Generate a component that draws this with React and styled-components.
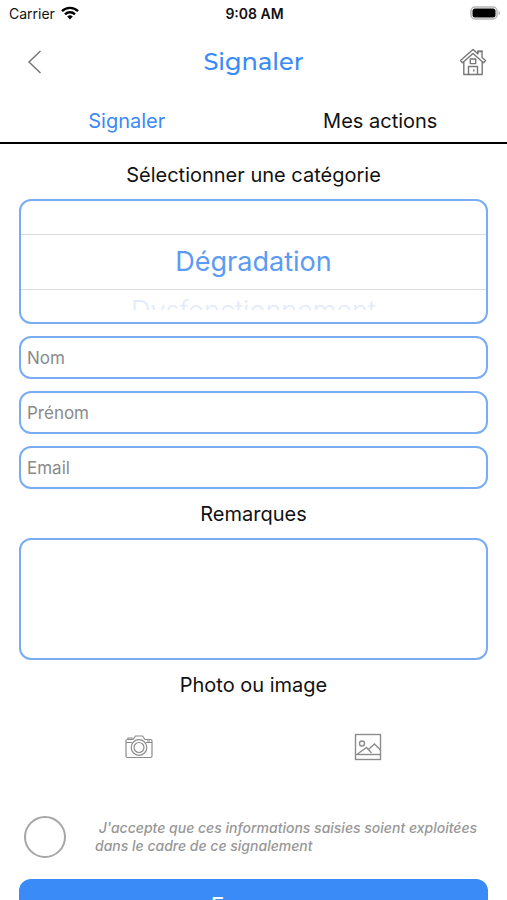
import React, { useState } from 'react';
import styled, { createGlobalStyle } from 'styled-components';

const GlobalStyle = createGlobalStyle`
  :root {
    --primary: #3a8af7;
    --outline: #78adf5;
    --muted: #8a8a8a;
    scrollbar-width: none;
  }

  *, *::before, *::after {
    box-sizing: border-box;
  }

  body {
    margin: 0;
    background: #fff;
    color: #111;
    font-family: Inter, 'Liberation Sans', sans-serif;
  }

  button, input, textarea {
    font: inherit;
    color: inherit;
  }
`;

const StatusBar = styled.div`
  display: grid;
  grid-template-columns: 1fr auto 1fr;
  align-items: center;
  height: 26px;
  padding: 0 7px 0 9px;
  font-size: 14px;
`;

const Carrier = styled.span`
  display: flex;
  align-items: center;
  gap: 6px;
`;

const Time = styled.time`
  font-weight: 600;
`;

const Battery = styled.svg`
  justify-self: end;
`;

const Header = styled.header`
  display: flex;
  align-items: center;
  justify-content: space-between;
  height: 71px;
  padding: 0 20px;
`;

const IconButton = styled.button`
  display: flex;
  padding: 0;
  border: 0;
  background: none;
  color: ${(props) => (props.$light ? '#8c8c8c' : '#777')};
  cursor: pointer;
`;

const Title = styled.h1`
  margin: 0;
  font-family: Montserrat, Inter, sans-serif;
  font-weight: 500;
  font-size: 24px;
  line-height: 28px;
  color: var(--primary);
`;

const Tabs = styled.nav`
  display: flex;
  height: 47px;
  border-bottom: 2px solid #000;
`;

const Tab = styled.a`
  flex: 1;
  padding-top: 11px;
  font-size: 20px;
  line-height: 26px;
  text-align: center;
  text-decoration: none;
  color: ${(props) => (props.$active ? 'var(--primary)' : 'inherit')};
`;

const Form = styled.form`
  display: flex;
  flex-direction: column;
  padding: 6px 19px 24px;
`;

const Label = styled.label`
  margin: 0;
  padding-top: 2px;
  font-weight: 400;
  font-size: 20px;
  line-height: 47px;
  text-align: center;
`;

const Fields = styled.div`
  display: flex;
  flex-direction: column;
  gap: 12px;
`;

const Picker = styled.div`
  display: flex;
  flex-direction: column;
  height: 125px;
  padding-top: 33px;
  border: 2px solid var(--outline);
  border-radius: 12px;
  overflow: hidden;
`;

const Option = styled.label`
  flex: none;
  font-size: 27px;
  text-align: center;
  cursor: pointer;

  input {
    position: absolute;
    opacity: 0;
    pointer-events: none;
  }
`;

const SelectedOption = styled(Option)`
  border-top: 1px solid #dcdcdc;
  border-bottom: 1px solid #dcdcdc;
  line-height: 54px;
  color: #5b9bf3;
`;

const NextOption = styled(Option)`
  order: 1;
  height: 20px;
  overflow: hidden;
  font-weight: 300;
  line-height: 42px;
  color: #e3ebfb;
`;

const Input = styled.input`
  width: 100%;
  height: 43px;
  padding: 0 6px;
  border: 2px solid var(--outline);
  border-radius: 12px;
  font-size: 17px;
  outline: none;

  &::placeholder {
    color: var(--muted);
    opacity: 1;
  }
`;

const TextArea = styled.textarea`
  display: block;
  height: 122px;
  padding: 8px 6px;
  border: 2px solid var(--outline);
  border-radius: 12px;
  font-size: 17px;
  resize: none;
  outline: none;
`;

const MediaRow = styled.div`
  display: flex;
  justify-content: space-around;
  height: 107px;
  padding: 24px 6px 0;
`;

const Consent = styled.label`
  display: flex;
  align-items: center;
  gap: 29px;
  padding-left: 5px;
  font-style: italic;
  font-weight: 500;
  font-size: 14px;
  line-height: 18px;
  color: #979797;
`;

const Round = styled.input`
  flex: none;
  appearance: none;
  width: 42px;
  height: 42px;
  margin: 0;
  border: 2px solid #a6a6a6;
  border-radius: 50%;

  &:checked {
    background: var(--primary);
  }
`;

const ConsentText = styled.span`
  white-space: pre-wrap;
`;

const Submit = styled.button`
  height: 52px;
  margin-top: 21px;
  border: 0;
  border-radius: 12px;
  background: var(--primary);
  color: #fff;
  font-weight: 500;
  font-size: 22px;
  cursor: pointer;
`;

const WifiIcon = () => (
  <svg width="18" height="14" viewBox="0 0 18 14" fill="none" stroke="#000" strokeWidth="2.4">
    <path d="M1 5.2a11.3 11.3 0 0 1 16 0" />
    <path d="M4 8.3a7.1 7.1 0 0 1 10 0" />
    <path d="M9 13.4 6.2 10.6a4 4 0 0 1 5.6 0Z" fill="#000" stroke="none" />
  </svg>
);

const BackIcon = () => (
  <svg width="28" height="28" viewBox="0 0 28 28" fill="none" stroke="currentColor" strokeWidth="1.5">
    <path d="M20.5 3 9 14l11.5 11" />
  </svg>
);

const HomeIcon = () => (
  <svg width="28" height="28" viewBox="0 0 28 28" fill="none" stroke="currentColor" strokeWidth="1.4" strokeLinejoin="round">
    <path d="M14 1.5 1.5 12.5l2 2.3L14 5.5l10.5 9.3 2-2.3L23 9.4V3.5h-4v2.4Z" />
    <path d="M18.2 3.2h5.6" />
    <path d="M4.8 14v12.5h18.4V14" />
    <path d="M9.5 26.5v-8h9v8M14.8 21.5v2" />
    <rect x="11.3" y="11" width="5.4" height="4.6" />
  </svg>
);

const CameraIcon = () => (
  <svg width="28" height="28" viewBox="0 0 28 28" fill="none" stroke="currentColor" strokeWidth="1.2">
    <path d="M2.5 6.5H8L10.5 3h7L20 6.5h5.5A1.5 1.5 0 0 1 27 8v15a1.5 1.5 0 0 1-1.5 1.5h-23A1.5 1.5 0 0 1 1 23V8a1.5 1.5 0 0 1 1.5-1.5Z" />
    <path d="M3 6.5V5h4v1.5M1 9.5h6M21 9.5h6M22 8h3" />
    <circle cx="14" cy="14.5" r="7.8" />
    <circle cx="14" cy="14.5" r="5" />
  </svg>
);

const ImageIcon = () => (
  <svg width="28" height="28" viewBox="0 0 28 28" fill="none" stroke="currentColor" strokeWidth="1.4">
    <rect x="1.5" y="1.5" width="25" height="25" />
    <path d="M1.5 21.5h25" />
    <circle cx="8" cy="10.5" r="2.5" />
    <path d="m3.5 21 9-6.5 5 5.5M14.5 16.500l6-5.500 6 6" />
  </svg>
);

const categories = ['Dégradation', 'Dysfonctionnement'];

export default function App() {
  const [selected, setSelected] = useState(0);

  return (
    <>
      <GlobalStyle />
      <StatusBar>
        <Carrier>
          Carrier
          <WifiIcon />
        </Carrier>
        <Time>9:08 AM</Time>
        <Battery width="30" height="14" viewBox="0 0 30 14">
          <rect x="1" y="1" width="26" height="12" rx="4" fill="#fff" stroke="#b5b5b5" strokeWidth="1.5" />
          <rect x="2.5" y="2.5" width="23" height="9" rx="2.5" />
          <path d="M28.5 5v4c1-.4 1.5-1.1 1.5-2s-.5-1.6-1.5-2Z" fill="#b5b5b5" />
        </Battery>
      </StatusBar>
      <Header>
        <IconButton type="button" aria-label="Retour">
          <BackIcon />
        </IconButton>
        <Title>Signaler</Title>
        <IconButton type="button" aria-label="Accueil">
          <HomeIcon />
        </IconButton>
      </Header>
      <Tabs>
        <Tab href="#signaler" $active>
          Signaler
        </Tab>
        <Tab href="#actions">Mes actions</Tab>
      </Tabs>
      <Form onSubmit={(e) => e.preventDefault()}>
        <Label as="h2" id="category">
          Sélectionner une catégorie
        </Label>
        <Fields>
          <Picker role="radiogroup" aria-labelledby="category">
            {categories.map((name, i) => {
              const Item = i === selected ? SelectedOption : NextOption;
              return (
                <Item key={name}>
                  <input type="radio" name="category" checked={i === selected} onChange={() => setSelected(i)} />
                  {name}
                </Item>
              );
            })}
          </Picker>
          <Input type="text" placeholder="Nom" aria-label="Nom" />
          <Input type="text" placeholder="Prénom" aria-label="Prénom" />
          <Input type="email" placeholder="Email" aria-label="Email" />
        </Fields>
        <Label htmlFor="remarks">Remarques</Label>
        <TextArea id="remarks" />
        <Label as="h2">Photo ou image</Label>
        <MediaRow>
          <IconButton type="button" aria-label="Photo" $light>
            <CameraIcon />
          </IconButton>
          <IconButton type="button" aria-label="Image" $light>
            <ImageIcon />
          </IconButton>
        </MediaRow>
        <Consent>
          <Round type="checkbox" />
          <ConsentText>
            {" J'accepte que ces informations saisies soient exploitées dans le cadre de ce signalement"}
          </ConsentText>
        </Consent>
        <Submit type="submit">Envoyer</Submit>
      </Form>
    </>
  );
}
